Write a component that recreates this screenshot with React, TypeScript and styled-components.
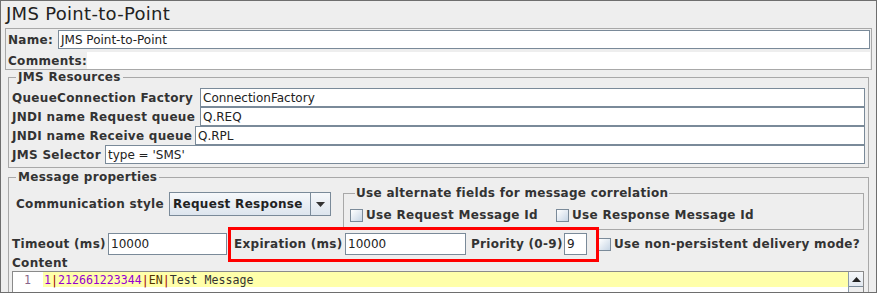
import React from 'react';
import styled, { createGlobalStyle } from 'styled-components';

const GlobalStyle = createGlobalStyle`
  html, body {
    margin: 0;
    padding: 0;
    background: #eeeeee;
  }
  * {
    box-sizing: border-box;
  }
`;

const Frame = styled.div`
  position: relative;
  width: 877px;
  height: 293px;
  overflow: hidden;
  border: 1px solid #6e6e6e;
  background: #eeeeee;
  font-family: 'DejaVu Sans', 'Liberation Sans', sans-serif;
  font-size: 12px;
  color: #333333;
`;

const Title = styled.div`
  height: 27px;
  padding: 2px 0 0 5px;
  font-size: 18px;
  line-height: 22px;
  letter-spacing: 0.3px;
  color: #222222;
`;

const NamePanel = styled.div`
  margin: 0 4px;
  border: 1px solid #a8a8a8;
  padding: 1px 1px 0 2px;
  display: flex;
  flex-direction: column;
  gap: 3px;
`;

const Row = styled.div`
  display: flex;
  align-items: center;
`;

const Label = styled.span<{ $w?: number; $ml?: number }>`
  font-weight: bold;
  white-space: nowrap;
  line-height: 14px;
  letter-spacing: 0.3px;
  flex: none;
  ${(p) => (p.$w ? `width: ${p.$w}px;` : '')}
  margin-left: ${(p) => p.$ml ?? 0}px;
`;

const TextField = styled.div<{ $w?: number; $h?: number }>`
  ${(p) => (p.$w ? `width: ${p.$w}px; flex: none;` : 'flex: 1;')}
  height: ${(p) => p.$h ?? 19}px;
  background: #ffffff;
  border: 1px solid #7a8a99;
  padding: 0 2px;
  display: flex;
  align-items: center;
  color: #222222;
  white-space: nowrap;
  overflow: hidden;
`;

const CommentsArea = styled.div`
  flex: 1;
  height: 17px;
  background: #ffffff;
`;

const Group = styled.fieldset<{ $mt?: number }>`
  margin: ${(p) => p.$mt ?? 0}px 7px 0 7px;
  border: 1px solid #a8a8a8;
  padding: 4px 3px 3px 3px;
  min-width: 0;
`;

const Legend = styled.legend`
  font-weight: bold;
  line-height: 14px;
  letter-spacing: 0.3px;
  padding: 0 2px;
  margin-left: 4px;
`;

const Rows = styled.div`
  display: flex;
  flex-direction: column;
`;

const CommRow = styled.div`
  display: flex;
  align-items: flex-start;
  padding-left: 4px;
  margin-top: -2px;
`;

const CommPart = styled.div`
  display: flex;
  align-items: center;
  margin-top: 6px;
`;

const Combo = styled.div`
  width: 162px;
  height: 24px;
  display: flex;
  border: 1px solid #7a8a99;
  background: linear-gradient(#f6f8fb, #dde5ee);
`;

const ComboText = styled.span`
  flex: 1;
  font-weight: bold;
  letter-spacing: 0.3px;
  padding-left: 3px;
  display: flex;
  align-items: center;
  color: #222222;
`;

const ComboButton = styled.span`
  width: 20px;
  border-left: 1px solid #7a8a99;
  display: flex;
  align-items: center;
  justify-content: center;
`;

const AltGroup = styled.fieldset`
  margin: 0 1px 0 12px;
  flex: 1;
  border: 1px solid #a8a8a8;
  padding: 8px 6px 7px 6px;
  min-width: 0;
`;

const AltLegend = styled.legend`
  font-weight: bold;
  line-height: 14px;
  letter-spacing: 0.3px;
  padding: 0 1px;
  margin-left: 5px;
`;

const Check = styled.label<{ $w?: number; $ml?: number }>`
  display: inline-flex;
  align-items: center;
  gap: 3px;
  font-weight: bold;
  letter-spacing: 0.3px;
  white-space: nowrap;
  line-height: 14px;
  flex: none;
  ${(p) => (p.$w ? `width: ${p.$w}px;` : '')}
  margin-left: ${(p) => p.$ml ?? 0}px;
`;

const Box = styled.span`
  width: 13px;
  height: 13px;
  flex: none;
  border: 1px solid #7a8a99;
  background: linear-gradient(135deg, #ffffff, #c6d5e5);
`;

const ParamRow = styled.div`
  display: flex;
  align-items: center;
  margin-top: 3px;
`;

const ContentLabel = styled(Label)`
  display: block;
  margin-top: 1px;
  height: 15px;
`;

const Editor = styled.div`
  display: flex;
  height: 40px;
  border: 1px solid #8a8a8a;
  margin-right: 1px;
`;

const Gutter = styled.div`
  width: 30px;
  background: #ffffff;
  font-family: 'DejaVu Sans Mono', 'Liberation Mono', monospace;
  font-size: 11.6px;
  color: #886688;
  text-align: right;
  padding: 1px 12px 0 0;
  line-height: 14px;
`;

const Code = styled.div`
  flex: 1;
  background: linear-gradient(#ffffaa 0 15px, #ffffff 15px);
  font-family: 'DejaVu Sans Mono', 'Liberation Mono', monospace;
  font-size: 11.6px;
  line-height: 14px;
  padding: 1px 0 0 1px;
  white-space: pre;
  color: #333333;
`;

const Tok = styled.span<{ $c: string }>`
  color: ${(p) => p.$c};
`;

const ScrollBar = styled.div`
  width: 15px;
  background: #eeeeee;
  border-left: 1px solid #8a9aaa;
`;

const ScrollButton = styled.div`
  height: 15px;
  border-bottom: 1px solid #7a8a99;
  background: linear-gradient(#f6f8fb, #e2e8ef);
  display: flex;
  align-items: center;
  justify-content: center;
`;

const Highlight = styled.div`
  position: absolute;
  left: 227px;
  top: 226px;
  width: 371px;
  height: 35px;
  border: 3px solid #ff0000;
  pointer-events: none;
`;

const Purple = '#9400d3';
const Pipe = '#990000';

export default function App() {
  return (
    <>
      <GlobalStyle />
      <Frame>
        <Title>JMS Point-to-Point</Title>
        <NamePanel>
          <Row>
            <Label $w={50}>Name:</Label>
            <TextField>JMS Point-to-Point</TextField>
          </Row>
          <Row>
            <Label $w={79}>Comments:</Label>
            <CommentsArea />
          </Row>
        </NamePanel>

        <Group>
          <Legend>JMS Resources</Legend>
          <Rows>
            <Row>
              <Label $w={188}>QueueConnection Factory</Label>
              <TextField>ConnectionFactory</TextField>
            </Row>
            <Row>
              <Label $w={188}>JNDI name Request queue</Label>
              <TextField>Q.REQ</TextField>
            </Row>
            <Row>
              <Label $w={183}>JNDI name Receive queue</Label>
              <TextField>Q.RPL</TextField>
            </Row>
            <Row>
              <Label $w={93}>JMS Selector</Label>
              <TextField>type = 'SMS'</TextField>
            </Row>
          </Rows>
        </Group>

        <Group $mt={2}>
          <Legend>Message properties</Legend>
          <CommRow>
            <CommPart>
              <Label $w={153}>Communication style</Label>
              <Combo>
                <ComboText>Request Response</ComboText>
                <ComboButton>
                  <svg width="9" height="5" viewBox="0 0 9 5">
                    <path d="M0 0 H9 L4.5 5 Z" fill="#333333" />
                  </svg>
                </ComboButton>
              </Combo>
            </CommPart>
            <AltGroup>
              <AltLegend>Use alternate fields for message correlation</AltLegend>
              <Row>
                <Check $w={206}>
                  <Box />
                  Use Request Message Id
                </Check>
                <Check>
                  <Box />
                  Use Response Message Id
                </Check>
              </Row>
            </AltGroup>
          </CommRow>

          <ParamRow>
            <Label $w={96}>Timeout (ms)</Label>
            <TextField $w={119} $h={22}>10000</TextField>
            <Label $w={111} $ml={7}>Expiration (ms)</Label>
            <TextField $w={121} $h={22}>10000</TextField>
            <Label $w={93} $ml={5}>Priority (0-9)</Label>
            <TextField $w={23} $h={22}>9</TextField>
            <Check $ml={11}>
              <Box />
              Use non-persistent delivery mode?
            </Check>
          </ParamRow>

          <ContentLabel>Content</ContentLabel>
          <Editor>
            <Gutter>1</Gutter>
            <Code>
              <Tok $c={Purple}>1</Tok>
              <Tok $c={Pipe}>|</Tok>
              <Tok $c={Purple}>212661223344</Tok>
              <Tok $c={Pipe}>|</Tok>
              <Tok $c="#553300">EN</Tok>
              <Tok $c={Pipe}>|</Tok>
              Test Message
            </Code>
            <ScrollBar>
              <ScrollButton>
                <svg width="9" height="5" viewBox="0 0 9 5">
                  <path d="M0 5 H9 L4.5 0 Z" fill="#222222" />
                </svg>
              </ScrollButton>
            </ScrollBar>
          </Editor>
        </Group>
        <Highlight />
      </Frame>
    </>
  );
}
